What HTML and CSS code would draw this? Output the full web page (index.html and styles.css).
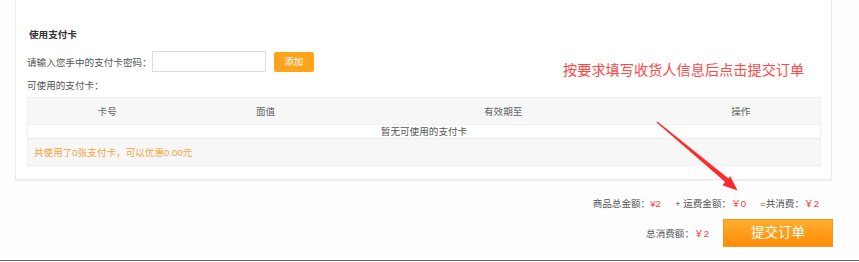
FILE: index.html
```html
<!DOCTYPE html>
<html>
<head>
    <meta charset="UTF-8">
    <title>提交订单</title>
    <link rel="stylesheet" href="styles.css">
</head>
<body>
<div class="page">
    <section class="card">
        <h3 class="card-title">使用支付卡</h3>
        <div class="add-row">
            <span>请输入您手中的支付卡密码：</span>
            <input type="text" class="card-pass"/>
            <a href="javascript:;" class="btn-add">添加</a>
        </div>
        <div class="usable">可使用的支付卡：</div>
        <table class="card-table">
            <thead>
            <tr>
                <th class="col-s">卡号</th>
                <th class="col-s">面值</th>
                <th class="col-l">有效期至</th>
                <th class="col-s">操作</th>
            </tr>
            </thead>
            <tbody>
            <tr class="empty">
                <td colspan="4">暂无可使用的支付卡</td>
            </tr>
            <tr class="used">
                <td colspan="4">共使用了0张支付卡，可以优惠0.00元</td>
            </tr>
            </tbody>
        </table>
    </section>

    <div class="sum">
        <span>商品总金额：<em>¥2</em></span>
        <span>+ 运费金额：<em>￥0</em></span>
        <span>=共消费：<em>￥2</em></span>
    </div>
    <div class="total">
        <span>总消费额：<em>￥2</em></span>
        <a href="javascript:;" class="btn-submit">提交订单</a>
    </div>
    <div class="foot"></div>

    <!--标注-->
    <p class="note">按要求填写收货人信息后点击提交订单</p>
    <svg class="arrow" width="859" height="262" viewBox="0 0 859 262">
        <polygon points="656.6,122.4 657.4,121.6 728.5,178.5 725.5,182.2" fill="#ff2a2a"/>
        <polygon points="737.5,190.5 722.4,185.2 730.3,176.2" fill="#ff2a2a"/>
    </svg>
</div>
</body>
</html>
```

FILE: styles.css
```css
* {
    margin: 0;
    padding: 0;
    font-family: "Liberation Sans", "Noto Sans CJK SC", sans-serif;
    font-size: 9.6px;
    color: #555;
}

a, a:hover, a:visited {
    text-decoration: none;
}

em {
    font-style: normal;
    color: #f33;
}

html, body {
    width: 100%;
    height: 100%;
    overflow: hidden;
    background: #fefefe;
}

.page {
    position: relative;
    height: 262px;
}

.card {
    margin: 0 27px 0 15px;
    padding: 28px 10px 13px 11px;
    border: 1px solid #ebebeb;
    border-top: 0;
    background: #fff;
    box-shadow: 0 1px 1px #f3f3f3;
}

.card-title {
    padding-left: 2px;
    line-height: 14px;
    font-weight: bold;
    color: #333;
}

.add-row {
    display: flex;
    align-items: center;
    margin-top: 9px;
    height: 21px;
}

.card-pass {
    box-sizing: border-box;
    width: 114px;
    height: 21px;
    border: 1px solid #ddd;
    outline: none;
}

.btn-add {
    margin-left: 8px;
    width: 40px;
    height: 20px;
    line-height: 20px;
    text-align: center;
    border-radius: 2px;
    background: #ffa31a;
    color: #fff;
}

.usable {
    margin-top: 7px;
    line-height: 14px;
}

.card-table {
    margin-top: 4px;
    width: 100%;
    border-collapse: collapse;
    table-layout: fixed;
    border-left: 1px solid #f0f0f0;
    border-right: 1px solid #f0f0f0;
}

.card-table th {
    height: 26px;
    font-weight: normal;
    color: #666;
    background: #f7f7f7;
    border-top: 1px solid #f0f0f0;
    border-bottom: 1px solid #f0f0f0;
}

.col-s {
    width: 20%;
}

.col-l {
    width: 40%;
}

.card-table .empty td {
    height: 13px;
    line-height: 13px;
    text-align: center;
    color: #555;
    background: #fff;
    border-bottom: 1px solid #ececec;
}

.card-table .used td {
    height: 26px;
    padding-left: 6px;
    color: #f9a33a;
    background: #f7f7f7;
    border-bottom: 1px solid #efefef;
}

.sum {
    display: flex;
    justify-content: flex-end;
    margin-top: 17px;
    padding-right: 40px;
    line-height: 14px;
}

.sum span {
    margin-left: 14px;
}

.total {
    display: flex;
    justify-content: flex-end;
    align-items: center;
    margin-top: 8px;
    padding-right: 26px;
}

.btn-submit {
    box-sizing: border-box;
    margin-left: 14px;
    width: 110px;
    height: 28px;
    line-height: 26px;
    text-align: center;
    font-size: 13.5px;
    color: #fff;
    border: 1px solid #f39a1c;
    background: linear-gradient(#ffae30, #ff8b05);
}

.foot {
    margin-top: 13px;
    height: 1px;
    background: #666;
}

.note {
    position: absolute;
    left: 563px;
    top: 61px;
    line-height: 18px;
    font-size: 14.2px;
    color: #ff4747;
}

.arrow {
    position: absolute;
    left: 0;
    top: 0;
    pointer-events: none;
}
```
